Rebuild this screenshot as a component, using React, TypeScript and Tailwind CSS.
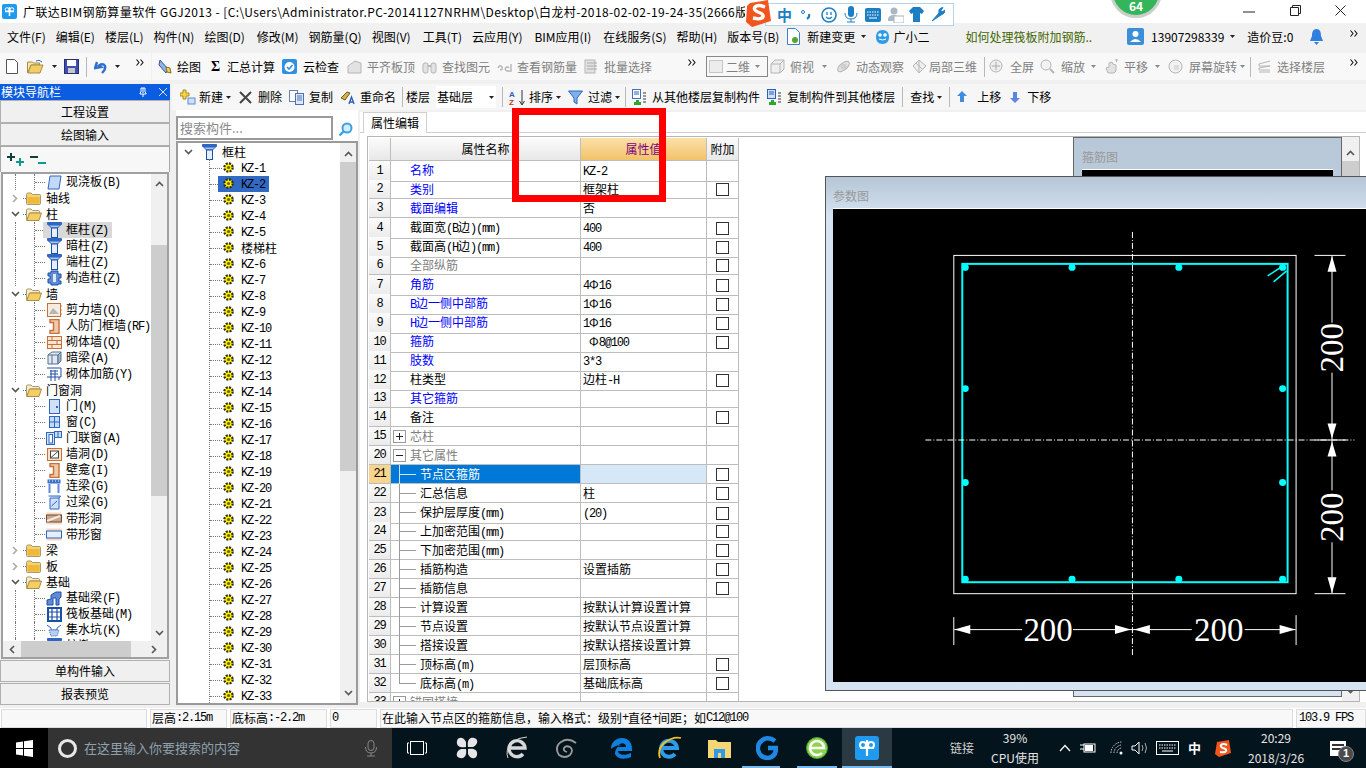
import React from "react";

const cjk = "[font-family:'Noto_Sans_CJK_SC','Liberation_Sans',sans-serif]";

function T({ s }: { s: string }) {
  const parts = s.split(/([\x00-\x7f]+)/).filter(Boolean);
  return (
    <>
      {parts.map((p, i) =>
        /^[\x00-\x7f]/.test(p) ? (
          <span key={i} className="[font-family:'Liberation_Mono',monospace] text-[12px] tracking-[-1.2px]">{p}</span>
        ) : (
          <span key={i}>{p}</span>
        )
      )}
    </>
  );
}

const Arrow = ({ cls = "", c = "#222" }: { cls?: string; c?: string }) => (
  <svg width="5" height="3" viewBox="0 0 5 3" className={cls}><path d="M0 0h5L2.5 3z" fill={c} /></svg>
);
const More = ({ cls = "" }: { cls?: string }) => (
  <svg width="8" height="7" viewBox="0 0 8 7" className={cls}><path d="M0.5 0.5 3 3.5 0.5 6.5M4.5 0.5 7 3.5 4.5 6.5" stroke="#111" fill="none" strokeWidth="1.1" /></svg>
);
const Sep = ({ cls = "" }: { cls?: string }) => <div className={`w-px h-[20px] bg-[#b8b8b8] ${cls}`} />;

/* ---------- tree icons ---------- */
const Col = () => (
  <svg width="15" height="16" viewBox="0 0 15 16"><path d="M0.5 0.5h14v2H0.5z" fill="#2f66c4" stroke="#2f66c4" /><path d="M1.5 3h12l-3 3h-6z" fill="#a9c4ee" stroke="#2f66c4" /><rect x="4.5" y="6" width="6" height="9.5" fill="#e4eefc" stroke="#1d4ea8" /></svg>
);
const Gear = () => (
  <svg width="11" height="11" viewBox="0 0 11 11"><circle cx="5.5" cy="5.5" r="4.2" fill="#ffef00" stroke="#2a2a10" strokeWidth="2.2" strokeDasharray="2 1.3" /><circle cx="5.5" cy="5.5" r="1.6" fill="#6c6410" /></svg>
);
const Folder = () => (
  <svg width="15" height="13" viewBox="0 0 15 13"><path d="M0.5 2.5Q0.5 1 2 1h3l1.5 1.5h7q1 0 1 1v8q0 1-1 1h-12q-1 0-1-1z" fill="#f5d26a" stroke="#a79a72" /><path d="M1.5 5h12v6.5h-12z" fill="#eeb93a" /></svg>
);
const FolderOpen = () => (
  <svg width="16" height="13" viewBox="0 0 16 13"><path d="M0.5 2Q0.5 1 2 1h3l1.5 1.5h6q1 0 1 1V5H4L1 12H0.5z" fill="#f8edc8" stroke="#a79a72" /><path d="M3.5 5h12L13 12.5H0.8z" fill="#f4cd63" stroke="#a88c4a" /></svg>
);
const Ic = ({ k }: { k: string }) => {
  const b = "#2f66c4";
  const o = "#c8703a";
  switch (k) {
    case "slab": return <svg width="15" height="15" viewBox="0 0 15 15"><path d="M3 1h11l-2 13H1z" fill="#c4d9f8" stroke={b} /></svg>;
    case "col": return <Col />;
    case "puzzle": return <svg width="15" height="16" viewBox="0 0 15 16"><path d="M4 1h7v3h3v4h-2v3h2v3h-3v1H4v-2H1V9h2V6H1V3h3z" fill="#5f8bd6" stroke="#1d4ea8" /><rect x="6" y="4" width="3" height="8" fill="#dce8fb" /></svg>;
    case "shear": return <svg width="15" height="14" viewBox="0 0 15 14"><rect x="0.5" y="0.5" width="13" height="13" fill="#f7ecdf" stroke={o} /><path d="M2 11 6 5l6 6z" fill="#b6b6b6" /><path d="M13 3h2M13 7h2M13 11h2" stroke={o} /></svg>;
    case "door": return <svg width="11" height="15" viewBox="0 0 11 15"><path d="M1 .5h9v14H1v-3h3.5v-8H1z" fill="#f1c9a6" stroke={o} strokeWidth="1.4" /></svg>;
    case "brick": return <svg width="15" height="13" viewBox="0 0 15 13"><rect x=".5" y=".5" width="14" height="12" fill="#fbe6d3" stroke={o} /><path d="M.5 4.5h14M.5 8.5h14M5 .5v4M10 4.5v4M5 8.5v4" stroke={o} /></svg>;
    case "beam": return <svg width="15" height="14" viewBox="0 0 15 14"><path d="M1 4 5 1h9l-3 3v9H1z" fill="#dfe8f3" stroke="#57708c" /><path d="M5 4v9M1 4h10M11 4l3-3v9l-3 3z" fill="#9fb6cf" stroke="#57708c" /></svg>;
    case "rebar": return <svg width="16" height="15" viewBox="0 0 16 15"><path d="M1 1h14v9H1M4 4h8M4 7h8M5 3v11M9 3v11M13 10v3" stroke="#1d4ea8" fill="none" /></svg>;
    case "dr": return <svg width="11" height="15" viewBox="0 0 11 15"><rect x=".5" y=".5" width="10" height="14" fill="#cfe0f8" stroke={b} /><rect x="7" y="7" width="2" height="2" fill={b} /></svg>;
    case "win": return <svg width="11" height="12" viewBox="0 0 11 12"><rect x=".5" y=".5" width="10" height="11" fill="#c4daf8" stroke={b} /><path d="M5.5 1v10M1 6h9" stroke={b} /></svg>;
    case "drwin": return <svg width="16" height="14" viewBox="0 0 16 14"><rect x=".5" y="1.5" width="8" height="12" fill="#d7e5fa" stroke={b} /><rect x="3" y="3.5" width="3.5" height="8.5" fill="#fff" stroke={b} /><rect x="8.5" y=".5" width="7" height="6" fill="#c4daf8" stroke={b} /><path d="M12 1v5" stroke={b} /></svg>;
    case "hole": return <svg width="15" height="13" viewBox="0 0 15 13"><rect x=".5" y=".5" width="14" height="12" fill="#fbe0c8" stroke={o} /><rect x="3.5" y="3" width="8" height="7" fill="#fff" stroke="#444" /><path d="M4 9.5 11 3.5" stroke="#444" /></svg>;
    case "lintel": return <svg width="14" height="14" viewBox="0 0 14 14"><rect x=".5" y=".5" width="13" height="4" fill="#3c70c9" /><path d="M2 2h1M5 2h1M8 2h1M11 2h1" stroke="#fff" /><path d="M2.5 5v9M11.5 5v9" stroke="#5f8bd6" strokeWidth="2" /></svg>;
    case "gl": return <svg width="13" height="15" viewBox="0 0 13 15"><path d="M.5 1h12l-1.5 2H2v11h9V3" fill="#cfe0f8" stroke={b} /><path d="M3.5 11 9 6" stroke={b} /></svg>;
    case "band": return <svg width="16" height="13" viewBox="0 0 16 13"><rect x=".5" y=".5" width="15" height="12" fill="#f8d8c0" /><rect x=".5" y="3" width="15" height="7" fill="#c9a88f" stroke="#6b4a33" /><path d="M1 9 14 4" stroke="#f5e9e0" strokeWidth="2" /></svg>;
    case "bandw": return <svg width="16" height="13" viewBox="0 0 16 13"><rect x=".5" y=".5" width="15" height="12" fill="#f8d8c0" /><rect x=".5" y="3" width="15" height="7" fill="#e4eefc" stroke={b} /></svg>;
    case "fbeam": return <svg width="16" height="15" viewBox="0 0 16 15"><path d="M1 14V9l4-1V4l5-3h5v5l-2 2v6h-3V7H7v7z" fill="#5f8bd6" stroke="#1d4ea8" /></svg>;
    case "raft": return <svg width="15" height="15" viewBox="0 0 15 15"><rect x="1" y="1" width="13" height="13" fill="#fff" stroke="#1d4ea8" strokeWidth="2" /><path d="M5 1v13M10 1v13M1 5h13M1 10h13" stroke="#1d4ea8" strokeWidth="1.2" /></svg>;
    case "pit": return <svg width="16" height="14" viewBox="0 0 16 14"><path d="M1 2l4 3v2h6V5l4-3" stroke={b} fill="none" /><path d="M3 7l2 6h6l2-6z" fill="#b9cef0" stroke={b} strokeDasharray="1 1" /></svg>;
    default: return null;
  }
};

/* ---------- left tree ---------- */
type L = { t: string; k?: string; f?: "o" | "c"; sel?: boolean };
const navRows: L[] = [
  { t: "现浇板(B)", k: "slab" }, { t: "轴线", f: "c" }, { t: "柱", f: "o" },
  { t: "框柱(Z)", k: "col", sel: true }, { t: "暗柱(Z)", k: "col" }, { t: "端柱(Z)", k: "col" }, { t: "构造柱(Z)", k: "puzzle" },
  { t: "墙", f: "o" }, { t: "剪力墙(Q)", k: "shear" }, { t: "人防门框墙(RF)", k: "door" }, { t: "砌体墙(Q)", k: "brick" }, { t: "暗梁(A)", k: "beam" }, { t: "砌体加筋(Y)", k: "rebar" },
  { t: "门窗洞", f: "o" }, { t: "门(M)", k: "dr" }, { t: "窗(C)", k: "win" }, { t: "门联窗(A)", k: "drwin" }, { t: "墙洞(D)", k: "hole" }, { t: "壁龛(I)", k: "door" }, { t: "连梁(G)", k: "lintel" }, { t: "过梁(G)", k: "gl" }, { t: "带形洞", k: "band" }, { t: "带形窗", k: "bandw" },
  { t: "梁", f: "c" }, { t: "板", f: "c" }, { t: "基础", f: "o" }, { t: "基础梁(F)", k: "fbeam" }, { t: "筏板基础(M)", k: "raft" }, { t: "集水坑(K)", k: "pit" }, { t: "柱墩(Y)", k: "col" },
];
const Chev = ({ open }: { open: boolean }) =>
  open ? (
    <svg width="9" height="6" viewBox="0 0 9 6"><path d="M1 1l3.5 3.5L8 1" stroke="#555" strokeWidth="1.6" fill="none" /></svg>
  ) : (
    <svg width="6" height="9" viewBox="0 0 6 9"><path d="M1 1l3.5 3.5L1 8" stroke="#aaa" strokeWidth="1.6" fill="none" /></svg>
  );

function NavRow({ r }: { r: L }) {
  return (
    <div className="relative h-[16px] flex items-center text-[12px] text-black whitespace-nowrap">
      <div className="absolute left-[12px] top-0 bottom-0 border-l border-dotted border-[#777]" />
      {r.f ? (
        <>
          <div className="absolute left-[7px] top-0 w-[10px] h-[16px] bg-white flex items-center justify-center"><Chev open={r.f === "o"} /></div>
          <div className="absolute left-[20px] top-[8px] w-[3px] border-t border-dotted border-[#777]" />
          <div className="absolute left-[23px] top-[2px]">{r.f === "o" ? <FolderOpen /> : <Folder />}</div>
          <span className="absolute left-[43px]"><T s={r.t} /></span>
        </>
      ) : (
        <>
          <div className="absolute left-[31px] top-0 bottom-0 border-l border-dotted border-[#777]" />
          <div className="absolute left-[32px] top-[8px] w-[10px] border-t border-dotted border-[#777]" />
          {r.sel && <div className="absolute left-[40px] top-0 w-[69px] h-[16px] bg-[#d9d9d9]" />}
          <div className="absolute left-[43px] top-0 w-[16px] h-[16px] flex items-center justify-center"><Ic k={r.k!} /></div>
          <span className="absolute left-[63px]"><T s={r.t} /></span>
        </>
      )}
    </div>
  );
}

const ScrollUp = () => <svg width="9" height="6" viewBox="0 0 9 6"><path d="M1 5l3.5-3.5L8 5" stroke="#555" strokeWidth="1.6" fill="none" /></svg>;
const ScrollDown = () => <svg width="9" height="6" viewBox="0 0 9 6"><path d="M1 1l3.5 3.5L8 1" stroke="#555" strokeWidth="1.6" fill="none" /></svg>;

function LeftPanel() {
  const btn = "h-[23px] flex items-center justify-center text-[12px] text-black bg-[#f0f0f0] border border-[#b0b0b0]";
  const btn2 = "h-[22px] flex items-center justify-center text-[12px] text-black bg-[#f0f0f0] border border-[#b0b0b0] mt-[1px]";
  return (
    <div className="w-[170px] shrink-0 flex flex-col">
      <div className="h-[16px] bg-[#0a5ce0] text-white text-[12px] leading-[16px] flex items-center pl-[1px]">
        <span className="flex-1">模块导航栏</span>
        <svg width="8" height="10" viewBox="0 0 8 10" className="mr-[12px]"><path d="M2 1h4v4l1 1v1H1V6l1-1zM4 7v3M4 1v5" stroke="#fff" fill="none" /></svg>
        <svg width="8" height="8" viewBox="0 0 8 8" className="mr-[3px]"><path d="M0 0l8 8M8 0L0 8" stroke="#cfe0ff" /></svg>
      </div>
      <div className={btn}>工程设置</div>
      <div className={btn}>绘图输入</div>
      <div className="h-[26px] bg-[#f7f7f7] border-x border-t border-[#a8a8a8] flex items-center pl-[6px] gap-[5px]">
        <svg width="18" height="13" viewBox="0 0 18 13"><path d="M0 4h8M4 0v8" stroke="#10403c" strokeWidth="2" /><path d="M9 9h8M13 5v8" stroke="#0c9b8f" strokeWidth="2" /></svg>
        <svg width="16" height="10" viewBox="0 0 16 10"><path d="M0 2h8" stroke="#10403c" strokeWidth="2" /><path d="M8 8h8" stroke="#0c9b8f" strokeWidth="2" /></svg>
      </div>
      <div className="h-[487px] border-2 border-[#a0a0a0] border-t-[#a0a0a0] bg-white flex flex-col ml-[1px] mr-[1px]">
        <div className="flex-1 flex overflow-hidden">
          <div className="w-[149px] overflow-hidden h-[467px]">{navRows.map((r, i) => <NavRow key={i} r={r} />)}</div>
          <div className="w-[16px] flex flex-col bg-[#f0f0f0]">
            <div className="h-[16px] flex items-center justify-center mt-[2px]"><ScrollUp /></div>
            <div className="h-[53px]" />
            <div className="h-[251px] bg-[#cdcdcd]" />
            <div className="flex-1" />
            <div className="h-[16px] flex items-center justify-center"><ScrollDown /></div>
          </div>
        </div>
        <div className="h-[16px] bg-[#f0f0f0] flex items-center">
          <div className="w-[18px] flex justify-center"><svg width="6" height="9" viewBox="0 0 6 9"><path d="M5 1 1.5 4.5 5 8" stroke="#555" strokeWidth="1.6" fill="none" /></svg></div>
          <div className="w-[110px] h-full bg-[#cdcdcd]" />
          <div className="w-[20px]" />
          <svg width="6" height="9" viewBox="0 0 6 9"><path d="M1 1l3.5 3.5L1 8" stroke="#555" strokeWidth="1.6" fill="none" /></svg>
        </div>
      </div>
      <div className={btn2}>单构件输入</div>
      <div className={btn2}>报表预览</div>
    </div>
  );
}

/* ---------- component list ---------- */
const kz: string[] = [];
for (let i = 1; i <= 33; i++) {
  kz.push(`KZ-${i}`);
  if (i === 5) kz.push("楼梯柱");
}

function CompList() {
  return (
    <div className="w-[188px] shrink-0 flex flex-col pl-[4px] pr-[2px] bg-[#f0f0f0]">
      <div className="h-[31px] bg-white flex items-end pb-[1px] pt-[6px]">
        <div className="w-[157px] h-[24px] border-2 border-[#9a9a9a] bg-white text-[13px] text-[#8a8a8a] flex items-center pl-[2px]">搜索构件...</div>
        <div className="flex-1 flex justify-center pb-[3px]">
          <svg width="15" height="15" viewBox="0 0 15 15"><circle cx="9" cy="6" r="4.5" fill="#d7ecfb" stroke="#3aa0e4" strokeWidth="2" /><path d="M5.5 9.5 1.5 13.5" stroke="#3aa0e4" strokeWidth="2.4" /></svg>
        </div>
      </div>
      <div className="h-[564px] border-2 border-[#9a9a9a] bg-white flex overflow-hidden">
        <div className="w-[163px] relative overflow-hidden text-[12px] text-black">
          <div className="h-[16px] relative flex items-center mt-[1px]">
            <div className="absolute left-[6px]"><ScrollDown /></div>
            <div className="absolute left-[24px] top-0"><Col /></div>
            <span className="absolute left-[44px]">框柱</span>
          </div>
          <div className="absolute left-[31px] top-[16px] bottom-0 border-l border-dotted border-[#777]" />
          {kz.map((k) => (
            <div key={k} className="relative h-[16px] flex items-center whitespace-nowrap">
              <div className="absolute left-[32px] top-[8px] w-[12px] border-t border-dotted border-[#777]" />
              {k === "KZ-2" && <div className="absolute left-[40px] top-0 w-[51px] h-[16px] bg-[#316ac5]" />}
              <div className="absolute left-[45px] top-[2px]"><Gear /></div>
              <span className="absolute left-[63px]"><T s={k} /></span>
            </div>
          ))}
        </div>
        <div className="w-[16px] flex flex-col bg-[#f0f0f0]">
          <div className="h-[16px] flex items-center justify-center mt-[3px]"><ScrollUp /></div>
          <div className="h-[309px] bg-[#cdcdcd]" />
          <div className="flex-1" />
          <div className="h-[16px] flex items-center justify-center mb-[2px]"><ScrollDown /></div>
        </div>
      </div>
    </div>
  );
}

/* ---------- property table ---------- */
type P = { n: string; name: string; c?: "b" | "g" | "k"; v?: string; ck?: boolean; child?: boolean; box?: "+" | "-"; last?: boolean; sel?: boolean };
const rows: P[] = [
  { n: "1", name: "名称", c: "b", v: "KZ-2" },
  { n: "2", name: "类别", c: "b", v: "框架柱", ck: true },
  { n: "3", name: "截面编辑", c: "b", v: "否" },
  { n: "4", name: "截面宽(B边)(mm)", v: "400", ck: true },
  { n: "5", name: "截面高(H边)(mm)", v: "400", ck: true },
  { n: "6", name: "全部纵筋", c: "g", ck: true },
  { n: "7", name: "角筋", c: "b", v: "4Φ16", ck: true },
  { n: "8", name: "B边一侧中部筋", c: "b", v: "1Φ16", ck: true },
  { n: "9", name: "H边一侧中部筋", c: "b", v: "1Φ16", ck: true },
  { n: "10", name: "箍筋", c: "b", v: " Φ8@100", ck: true },
  { n: "11", name: "肢数", c: "b", v: "3*3" },
  { n: "12", name: "柱类型", v: "边柱-H", ck: true },
  { n: "13", name: "其它箍筋", c: "b" },
  { n: "14", name: "备注", ck: true },
  { n: "15", name: "芯柱", c: "g", box: "+" },
  { n: "20", name: "其它属性", c: "g", box: "-" },
  { n: "21", name: "节点区箍筋", child: true, ck: true, sel: true },
  { n: "22", name: "汇总信息", child: true, v: "柱", ck: true },
  { n: "23", name: "保护层厚度(mm)", child: true, v: "(20)", ck: true },
  { n: "24", name: "上加密范围(mm)", child: true, ck: true },
  { n: "25", name: "下加密范围(mm)", child: true, ck: true },
  { n: "26", name: "插筋构造", child: true, v: "设置插筋", ck: true },
  { n: "27", name: "插筋信息", child: true, ck: true },
  { n: "28", name: "计算设置", child: true, v: "按默认计算设置计算" },
  { n: "29", name: "节点设置", child: true, v: "按默认节点设置计算" },
  { n: "30", name: "搭接设置", child: true, v: "按默认搭接设置计算" },
  { n: "31", name: "顶标高(m)", child: true, v: "层顶标高", ck: true },
  { n: "32", name: "底标高(m)", child: true, v: "基础底标高", ck: true, last: true },
  { n: "33", name: "锚固搭接", c: "g", box: "+" },
];

const Box = ({ s }: { s: "+" | "-" }) => (
  <svg width="13" height="13" viewBox="0 0 13 13"><rect x=".5" y=".5" width="12" height="12" fill="#fff" stroke="#9a9a9a" /><path d={s === "+" ? "M3 6.5h7M6.5 3v7" : "M3 6.5h7"} stroke="#222" /></svg>
);

function Row({ r }: { r: P }) {
  const color = r.sel ? "text-white" : r.c === "b" ? "text-[#0000ff]" : r.c === "g" ? "text-[#808080]" : "text-black";
  return (
    <div className="grid grid-cols-[22px_190px_126px_32px] h-[19px] text-[12px] leading-[18px]">
      <div className={`flex items-center justify-center border-r border-b border-[#bdbdbd] text-black ${r.sel ? "bg-[#f8d48c] text-[#800080]" : "bg-gradient-to-b from-[#fbfbfb] to-[#ebebeb]"}`}>
        <span className="[font-family:'Liberation_Mono',monospace] text-[12px] tracking-[-1.2px]">{r.n}</span>
      </div>
      <div className={`relative border-r border-b border-[#bdbdbd] whitespace-nowrap ${r.sel ? "bg-[#0078d7]" : ""} ${color}`}>
        {r.box && <div className="absolute left-[2px] top-[3px]"><Box s={r.box} /></div>}
        {r.child && (
          <>
            <div className={`absolute left-[8px] top-0 w-px ${r.last ? "h-[10px]" : "h-[19px]"} ${r.sel ? "bg-[#cfe3f7]" : "bg-[#9a9a9a]"}`} />
            <div className={`absolute left-[8px] top-[9px] w-[17px] h-px ${r.sel ? "bg-[#cfe3f7]" : "bg-[#9a9a9a]"}`} />
          </>
        )}
        <span className={`absolute top-0 ${r.child ? "left-[29px]" : "left-[19px]"}`}><T s={r.name} /></span>
      </div>
      <div className={`border-r border-b border-[#bdbdbd] pl-[2px] whitespace-pre text-black ${r.sel ? "bg-[#d6e8f7]" : ""}`}>{r.v && <T s={r.v} />}</div>
      <div className="border-r border-b border-[#bdbdbd] flex items-center justify-center">
        {r.ck && <div className="w-[13px] h-[13px] border border-[#333] bg-white" />}
      </div>
    </div>
  );
}

function PropTable() {
  return (
    <div className="w-[370px] shrink-0 h-[563px] overflow-hidden ml-[1px] mt-px">
      <div className="grid grid-cols-[22px_190px_126px_32px] h-[23px] text-[12px]">
        <div className="border-r border-b border-[#bdbdbd] bg-gradient-to-b from-[#fbfbfb] to-[#e8e8e8]" />
        <div className="border-r border-b border-[#bdbdbd] bg-gradient-to-b from-[#fbfbfb] to-[#e8e8e8] flex items-center justify-center text-black">属性名称</div>
        <div className="border-r border-b border-[#bdbdbd] bg-gradient-to-b from-[#fbe0a8] to-[#f2c268] flex items-center justify-center text-[#800080]">属性值</div>
        <div className="border-r border-b border-[#bdbdbd] bg-gradient-to-b from-[#fbfbfb] to-[#e8e8e8] flex items-center justify-center text-black">附加</div>
      </div>
      {rows.map((r) => <Row key={r.n} r={r} />)}
    </div>
  );
}

/* ---------- toolbars ---------- */
function TB({ icon, label, cls = "", gray, gap = "gap-[5px]" }: { icon: React.ReactNode; label: string; cls?: string; gray?: boolean; gap?: string }) {
  return (
    <div className={`flex items-center shrink-0 ${gap} ${cls}`}>
      {icon}
      <span className={`text-[12px] whitespace-nowrap ${gray ? "text-[#808080]" : "text-black"}`}>{label}</span>
    </div>
  );
}
const G = ({ d }: { d: React.ReactNode }) => <svg width="15" height="15" viewBox="0 0 15 15" className="shrink-0">{d}</svg>;
const gs = { stroke: "#b5b5b5", fill: "#e2e2e2" };

function Toolbar1() {
  return (
    <div className="h-[27px] flex items-center mt-[3px] bg-[#f0f0f0] shrink-0">
      <div className="w-[151px] h-full bg-[#f8f8f8] flex items-center pl-[6px]">
        <svg width="12" height="15" viewBox="0 0 12 15"><path d="M.5.5h8l3 3v11H.5z" fill="#fff" stroke="#555" /></svg>
        <svg width="17" height="15" viewBox="0 0 17 15" className="ml-[9px]"><path d="M.5 3h5l1 1h6v2H4L1 13.5H.5z" fill="#f8e3a8" stroke="#a88c4a" /><path d="M4 6h12l-3 8H1z" fill="#f4cd63" stroke="#a88c4a" /><path d="M9 2q3-2 6 1" stroke="#3a6fc8" fill="none" /></svg>
        <Arrow cls="ml-[8px]" />
        <svg width="15" height="15" viewBox="0 0 15 15" className="ml-[7px]"><rect x=".5" y=".5" width="14" height="14" fill="#3d4fb0" stroke="#27306e" /><rect x="3" y="1" width="9" height="6" fill="#fff" /><rect x="4" y="9" width="7" height="5" fill="#c8c8c8" /></svg>
        <Sep cls="ml-[7px]" />
        <svg width="13" height="14" viewBox="0 0 13 14" className="ml-[7px]"><path d="M3 2 1 8l6-1-2-1.5Q9 3 11 6q1 3-3 7" stroke="#2f6fd0" strokeWidth="2.4" fill="none" /></svg>
        <Arrow cls="ml-[8px]" />
        <More cls="ml-[16px] mb-[8px]" />
      </div>
      <div className="w-[549px] h-full bg-[#f8f8f8] ml-px flex items-center pl-[5px] relative">
        <TB label="绘图" icon={<svg width="15" height="16" viewBox="0 0 15 16"><path d="M3 1l8 9-2 4-7-8z" fill="#8fb3e6" stroke="#33558f" /><path d="M9 8l4 1 1 5-4-1z" fill="#f4cd63" stroke="#8c6d20" /></svg>} />
        <TB cls="ml-[10px]" label="汇总计算" icon={<span className="w-[11px] font-bold text-[14px] leading-none text-black [font-family:'Liberation_Serif',serif]">Σ</span>} />
        <TB cls="ml-[7px]" gap="gap-[6px]" label="云检查" icon={<svg width="15" height="15" viewBox="0 0 15 15"><rect width="15" height="15" rx="2" fill="#2f8fe0" /><circle cx="7.5" cy="8" r="5" fill="#fff" /><path d="M5 8l2 2 3.5-4" stroke="#2f8fe0" strokeWidth="1.6" fill="none" /></svg>} />
        <TB cls="ml-[8px]" gray label="平齐板顶" icon={<G d={<path d="M1 14V7l7-5 6 2v10z" {...gs} />} />} />
        <TB cls="ml-[7px]" gray label="查找图元" icon={<G d={<><rect x="1" y="4" width="5" height="10" rx="2" {...gs} /><rect x="9" y="4" width="5" height="10" rx="2" {...gs} /><path d="M6 7h3" stroke="#b5b5b5" strokeWidth="2" /></>} />} />
        <TB cls="ml-[7px]" gray label="查看钢筋量" icon={<G d={<path d="M1 9q2-4 4-1 1 3-2 3M14 5v7h-4a2 2 0 1 1 2-3" fill="none" stroke="#b5b5b5" strokeWidth="1.4" />} />} />
        <TB cls="ml-[7px]" gray label="批量选择" icon={<G d={<><rect x="1" y="1" width="10" height="13" {...gs} /><path d="M3 4h10M3 7h10M3 10h10" stroke="#aaa" /></>} />} />
        <More cls="absolute right-[5px] top-[6px]" />
      </div>
      <div className="flex-1 h-full bg-[#f8f8f8] flex items-center relative">
        <div className="ml-[5px] w-[62px] h-[21px] border border-[#888] flex items-center pl-[2px] shrink-0">
          <div className="w-[14px] h-[13px] bg-[#ececec] border border-[#c6c6c6]" />
          <span className="ml-[3px] text-[12px] text-[#808080]">二维</span>
          <Arrow cls="ml-[5px]" c="#888" />
        </div>
        <TB cls="ml-[2px]" gray label="俯视" icon={<G d={<path d="M1 5l4-4h9v9l-4 4H1zM1 5h9v9M10 5l4-4" {...gs} fill="#efefef" />} />} />
        <Arrow cls="ml-[8px]" c="#888" />
        <TB cls="ml-[9px]" gray label="动态观察" icon={<G d={<><ellipse cx="7.5" cy="7.5" rx="7" ry="3.5" transform="rotate(-40 7.5 7.5)" {...gs} /><circle cx="7.5" cy="7.5" r="3" fill="#cfcfcf" /></>} />} />
        <TB cls="ml-[8px]" gap="gap-[2px]" gray label="局部三维" icon={<G d={<path d="M7 1l7 6-7 7-6-7zM4 4l7 7M7 1v13" {...gs} fill="#eee" />} />} />
        <Sep cls="ml-[7px]" />
        <TB cls="ml-[4px]" gap="gap-[6px]" gray label="全屏" icon={<G d={<><circle cx="7" cy="7" r="6" fill="#eee" stroke="#b5b5b5" /><path d="M3 7h8M7 3v8" stroke="#aaa" /></>} />} />
        <TB cls="ml-[6px]" gap="gap-[6px]" gray label="缩放" icon={<G d={<><circle cx="6" cy="6" r="5" fill="#f3f3f3" stroke="#b5b5b5" /><path d="M10 10l4 4" stroke="#b5b5b5" strokeWidth="2" /></>} />} />
        <Arrow cls="ml-[6px]" c="#888" />
        <TB cls="ml-[8px]" gray label="平移" icon={<G d={<path d="M4 14l-2-5 3-1V4l3-1 1 2 3 1v6l-2 2zM11 1h3M12.5 0v3" {...gs} />} />} />
        <Arrow cls="ml-[7px]" c="#888" />
        <TB cls="ml-[8px]" gap="gap-[6px]" gray label="屏幕旋转" icon={<G d={<><circle cx="7.5" cy="7.5" r="6.5" fill="#f2f2f2" stroke="#b5b5b5" /><rect x="6" y="6" width="5" height="5" fill="#ddd" /></>} />} />
        <Arrow cls="ml-[3px]" c="#888" />
        <Sep cls="ml-[5px]" />
        <TB cls="ml-[6px]" gray label="选择楼层" icon={<G d={<path d="M13 2 2 5v2h11M13 7 2 9v2h11M2 13h11" fill="none" stroke="#b5b5b5" />} />} />
        <More cls="absolute right-[8px] top-[6px]" />
      </div>
    </div>
  );
}

function Toolbar2() {
  return (
    <div className="h-[26px] bg-[#f6f6f6] flex items-center pl-[8px] shrink-0">
      <TB gap="gap-[3px]" label="新建" icon={<svg width="16" height="16" viewBox="0 0 16 16"><path d="M3 1h3v3h3v3H6v3H3V7H0V4h3z" fill="#f6d24a" stroke="#a88c20" /><rect x="8" y="9" width="7" height="6" fill="#cfe0f8" stroke="#5f8bd6" /></svg>} />
      <Arrow cls="ml-[3px]" />
      <TB cls="ml-[8px]" gap="gap-[6px]" label="删除" icon={<svg width="13" height="13" viewBox="0 0 13 13"><path d="M1 1l11 11M12 1 1 12" stroke="#444" strokeWidth="2" /></svg>} />
      <TB cls="ml-[7px]" label="复制" icon={<svg width="15" height="15" viewBox="0 0 15 15"><rect x=".5" y=".5" width="8" height="11" fill="#fff" stroke="#6a7fa8" /><rect x="6.5" y="3.5" width="8" height="11" fill="#dfe8f8" stroke="#4a6fb8" /><path d="M8 6h5M8 8h5M8 10h5" stroke="#4a6fb8" /></svg>} />
      <TB cls="ml-[7px]" label="重命名" icon={<svg width="15" height="15" viewBox="0 0 15 15"><path d="M1 8l6-6 3 1-5 7z" fill="#d6b24a" stroke="#6d5a20" /><path d="M9 14l2.5-7L14 14M10 12h3" stroke="#2f5fb8" strokeWidth="1.4" fill="none" /></svg>} />
      <Sep cls="ml-[6px]" />
      <span className="ml-[3px] text-[12px]">楼层</span>
      <div className="ml-[6px] w-[60px] h-[22px] bg-white flex items-center text-[12px] pl-[1px] shrink-0">基础层<Arrow cls="ml-auto mr-[2px]" /></div>
      <Sep cls="ml-[6px]" />
      <TB cls="ml-[5px]" gap="gap-[3px]" label="排序" icon={<svg width="18" height="17" viewBox="0 0 18 17"><path d="M14 1v14M11.5 12l2.5 4 2.5-4" stroke="#333" fill="none" /><text x="1" y="8" fontSize="8" fill="#2f5fb8" fontFamily="Liberation Sans" fontWeight="700">A</text><text x="1" y="16" fontSize="8" fill="#c0392b" fontFamily="Liberation Sans" fontWeight="700">Z</text></svg>} />
      <Arrow cls="ml-[3px]" />
      <TB cls="ml-[7px]" label="过滤" icon={<svg width="15" height="15" viewBox="0 0 15 15"><path d="M.5 1h14L9 8v6l-3-2V8z" fill="#7fb0e8" stroke="#2f66c4" /></svg>} />
      <Arrow cls="ml-[3px]" />
      <Sep cls="ml-[5px]" />
      <TB cls="ml-[6px]" label="从其他楼层复制构件" icon={<svg width="15" height="17" viewBox="0 0 15 17"><rect x=".5" y=".5" width="8" height="9" fill="#fff" stroke="#4a6fb8" /><path d="M2 3h5M2 5h5" stroke="#2f5fb8" /><path d="M4 11h3v2h2v3H2v-3h2z" fill="#2fa52f" /><path d="M11 4h3M11 7h3M11 10h3M11 13h3" stroke="#777" strokeWidth="1.6" /></svg>} />
      <TB cls="ml-[7px]" label="复制构件到其他楼层" icon={<svg width="15" height="17" viewBox="0 0 15 17"><rect x=".5" y=".5" width="8" height="9" fill="#cfe0f8" stroke="#2f5fb8" /><path d="M2 3h5M2 5h5" stroke="#2f5fb8" /><path d="M4 11h3v2h2v3H2v-3h2z" fill="#2fa52f" /><path d="M11 4h3M11 7h3M11 10h3M11 13h3" stroke="#777" strokeWidth="1.6" /></svg>} />
      <Sep cls="ml-[7px]" />
      <span className="ml-[7px] text-[12px] shrink-0">查找</span>
      <Arrow cls="ml-[3px]" />
      <Sep cls="ml-[7px]" />
      <TB cls="ml-[7px]" gap="gap-[10px]" label="上移" icon={<svg width="10" height="12" viewBox="0 0 10 12"><path d="M5 0l5 5H7v6H3V5H0z" fill="#3f8ce0" /></svg>} />
      <TB cls="ml-[9px]" gap="gap-[7px]" label="下移" icon={<svg width="10" height="12" viewBox="0 0 10 12"><path d="M5 12 0 7h3V1h4v6h3z" fill="#5d86e0" /></svg>} />
    </div>
  );
}

function MenuBar() {
  const items = [
    { t: "文件(F)", c: "" }, { t: "编辑(E)", c: "" }, { t: "楼层(L)", c: "" }, { t: "构件(N)", c: "" }, { t: "绘图(D)", c: "mr-[2px]" }, { t: "修改(M)", c: "" }, { t: "钢筋量(Q)", c: "" },
    { t: "视图(V)", c: "mr-[2px]" }, { t: "工具(T)", c: "" }, { t: "云应用(Y)", c: "mr-[2px]" }, { t: "BIM应用(I)", c: "mr-[2px]" }, { t: "在线服务(S)", c: "" }, { t: "帮助(H)", c: "" }, { t: "版本号(B)", c: "" },
  ];
  return (
    <div className="h-[27px] bg-[#f1f1f1] flex items-center pl-[7px] text-[12px] text-black shrink-0 relative">
      <div className="flex gap-[10px] whitespace-nowrap">{items.map((m) => <span key={m.t} className={m.c}>{m.t}</span>)}</div>
      <svg width="13" height="17" viewBox="0 0 13 17" className="ml-[8px]"><path d="M.5.5h8l4 4v12H.5z" fill="#fff" stroke="#3a7fd0" /><circle cx="8" cy="12" r="3" fill="#57a52f" /></svg>
      <span className="ml-[7px]">新建变更</span>
      <Arrow cls="ml-[6px]" />
      <svg width="15" height="16" viewBox="0 0 15 16" className="ml-[9px]"><path d="M7.5 1C12 1 14 4 14 8s-2 7-6.500 7S1 12 1 8s2-7 6.500-7z" fill="#2f9be8" /><circle cx="5" cy="6" r="1.800" fill="#fff" /><circle cx="10" cy="6" r="1.800" fill="#fff" /><path d="M4 10q3.500 2 7 0" stroke="#fff" fill="none" /></svg>
      <span className="ml-[3px]">广小二</span>
      <span className="ml-[36px] text-[#3f6600]">如何处理筏板附加钢筋..</span>
      <svg width="17" height="17" viewBox="0 0 17 17" className="ml-[35px]"><rect width="17" height="17" rx="2" fill="#3a8fd8" /><circle cx="8.500" cy="6" r="3" fill="#fff" /><path d="M3 14q5.500-6 11 0z" fill="#fff" /></svg>
      <span className="ml-[7px]">13907298339</span>
      <Arrow cls="ml-[6px]" />
      <span className="ml-[12px]">造价豆:0</span>
      <svg width="13" height="17" viewBox="0 0 13 17" className="ml-[17px]"><path d="M6.500 1C10 1 11 4 11 8l2 5H0l2-5c0-4 1-7 4.500-7z" fill="#2f7fe0" /><path d="M4 14h5l-2.500 3z" fill="#2f7fe0" /></svg>
      <More cls="absolute right-[8px] top-[7px]" />
    </div>
  );
}

/* ---------- overlays ---------- */
function Ime() {
  const c = "#1c7fc4";
  return (
    <div className="absolute left-[745px] top-0 flex items-start z-30">
      <svg width="26" height="28" viewBox="0 0 26 28" className="z-10">
        <path d="M5 3 23 0l3 21-19 6L1 22 2 6z" fill="#f0561d" />
        <path d="M20 7q-7-3-10 0-2 3 3 5 6 2 5 5-2 3-10 1" stroke="#fff" strokeWidth="3.4" fill="none" />
      </svg>
      <div className="-ml-[6px] mt-[3px] w-[189px] h-[23px] bg-white border border-[#b8d2e8] flex items-center pl-[11px] gap-[6px]">
        <span className="text-[15px] font-bold leading-none" style={{ color: c }}>中</span>
        <svg width="12" height="12" viewBox="0 0 12 12" className="ml-[2px]"><circle cx="3" cy="3" r="1.500" fill="none" stroke={c} /><path d="M9 5q1 3-2 5" stroke={c} strokeWidth="2" fill="none" /></svg>
        <svg width="16" height="16" viewBox="0 0 16 16" className="ml-[3px]"><circle cx="8" cy="8" r="7" fill="none" stroke={c} strokeWidth="1.600" /><path d="M6 5v3M10 5v3M5 10q3 3 6 0" stroke={c} fill="none" strokeWidth="1.300" /></svg>
        <svg width="14" height="17" viewBox="0 0 14 17" className="ml-[1px]"><rect x="4" y="0" width="6" height="11" rx="3" fill={c} /><path d="M1 7q0 6 6 6t6-6M7 13v3M3 16h8" stroke={c} fill="none" /></svg>
        <svg width="16" height="14" viewBox="0 0 16 14" className="ml-[1px]"><rect width="16" height="14" rx="2" fill={c} /><path d="M2 4h12M2 7h12" stroke="#fff" strokeDasharray="1.500 1" /><path d="M4 10h8" stroke="#fff" /></svg>
        <svg width="16" height="17" viewBox="0 0 16 17" className="ml-[1px]"><circle cx="6" cy="5" r="3.500" fill="#a8b8c4" /><path d="M0 14q0-5 6-5 4 0 5 3v3H0z" fill="#a8b8c4" /><rect x="6" y="10" width="10" height="7" fill="#fff" stroke="#a8b8c4" /></svg>
        <svg width="15" height="15" viewBox="0 0 15 15" className="-ml-[1px]"><path d="M4 0h7l4 4-2 3-2-1v9H4V6L2 7 0 4z" fill={c} /></svg>
        <svg width="14" height="15" viewBox="0 0 14 15" className="ml-[1px]"><path d="M1 14l7-8q-1-4 2-5l2-.5-2 3 1 1.500 3-2q0 4-4 5z" fill={c} stroke={c} /></svg>
      </div>
    </div>
  );
}

function Dim() {
  const vDash = "6 2 1 2";
  return (
    <svg className="w-full h-full block" viewBox="833 208 533 474" fontFamily="Liberation Serif, serif">
      <rect x="953.5" y="254.5" width="343" height="339" fill="none" stroke="#fff" />
      <rect x="962" y="263" width="326" height="319" fill="none" stroke="#00ffff" strokeWidth="2" />
      {[965, 1072, 1179, 1283].map((x) => <circle key={x} cx={x} cy={266.5} r="3.500" fill="#00ffff" />)}
      {[965, 1072, 1179, 1283].map((x) => <circle key={x} cx={x} cy={579} r="3.500" fill="#00ffff" />)}
      {[388, 482].map((y) => [965, 1283].map((x) => <circle key={x + "-" + y} cx={x} cy={y} r="3.500" fill="#00ffff" />))}
      <path d="M1268 275 1285 264M1274 281 1287 270" stroke="#00ffff" strokeWidth="1.500" />
      <path d="M1132.500 231V657" stroke="#fff" strokeDasharray={vDash} />
      <path d="M925 439.500H1355" stroke="#fff" strokeDasharray={vDash} />
      <path d="M1315 254.500H1346M1315 593.500H1346M1315 439.500H1346" stroke="#fff" />
      <path d="M1332.500 255V322M1332.500 372V490M1332.500 542V593" stroke="#fff" />
      <path d="M1332.500 255 1337 271H1328zM1332.500 438 1328 423H1337zM1332.500 441 1337 456H1328zM1332.500 593 1328 577H1337z" fill="#fff" />
      <text transform="translate(1344 347) rotate(-90)" textAnchor="middle" fontSize="33" fill="#fff">200</text>
      <text transform="translate(1344 517) rotate(-90)" textAnchor="middle" fontSize="33" fill="#fff">200</text>
      <path d="M953.500 617V645M1296.500 615V645" stroke="#fff" />
      <path d="M954 629.500H1022M1073 629.500H1192M1245 629.500H1296" stroke="#fff" />
      <path d="M954 629.500 970 625V634zM1131 629.500 1115 625V634zM1134 629.500 1150 625V634zM1296 629.500 1280 625V634z" fill="#fff" />
      <text x="1048" y="641" textAnchor="middle" fontSize="33" fill="#fff">200</text>
      <text x="1219" y="641" textAnchor="middle" fontSize="33" fill="#fff">200</text>
    </svg>
  );
}

/* ---------- taskbar ---------- */
const TaskIcon = ({ children, cls = "" }: { children: React.ReactNode; cls?: string }) => (
  <div className={`w-[50px] h-full flex items-center justify-center relative shrink-0 ${cls}`}>{children}</div>
);
const EGlyph = ({ c, w = 3.4 }: { c: string; w?: number }) => <path d="M5 12h15a8 8 0 1 0-2 6" stroke={c} strokeWidth={w} fill="none" />;

function Taskbar() {
  return (
    <div className="h-[40px] bg-[#04141c] flex items-center shrink-0 text-white relative">
      <div className="w-[48px] h-full bg-black flex items-center justify-center shrink-0">
        <svg width="17" height="17" viewBox="0 0 17 17"><path d="M0 2.500 7 1.500V8H0zM8 1.300 17 0V8H8zM0 9h7v6.500L0 14.500zM8 9h9v8l-9-1.300z" fill="#fff" /></svg>
      </div>
      <div className="w-[344px] h-full bg-[#333333] flex items-center shrink-0 relative">
        <div className="ml-[10px] w-[19px] h-[19px] rounded-full border-[3px] border-[#e8e8e8]" />
        <span className="ml-[7px] text-[13px] text-[#8fa0ae]">在这里输入你要搜索的内容</span>
        <svg width="12" height="17" viewBox="0 0 12 17" className="absolute left-[317px] top-[12px]"><rect x="3" y=".5" width="6" height="10" rx="3" fill="none" stroke="#888" /><path d="M.5 7q0 6 5.500 6t5.500-6M6 13v3M2 16h8" stroke="#888" fill="none" /></svg>
      </div>
      <TaskIcon><svg width="20" height="14" viewBox="0 0 20 14"><rect x="3.500" y=".5" width="13" height="13" fill="none" stroke="#fff" /><path d="M2 2H.5v10H2M18 2h1.500v10H18" stroke="#fff" fill="none" /></svg></TaskIcon>
      <TaskIcon><svg width="22" height="22" viewBox="0 0 22 22"><g fill="#e6e6e6"><path d="M10 10C4 11 0 9 1 4s7-4 9 1zM12 10C11 4 13 0 18 1s4 7-1 9zM12 12c6-1 10 1 9 6s-7 4-9-1zM10 12c1 6-1 10-6 9s-4-7 1-9z" /></g></svg></TaskIcon>
      <TaskIcon><svg width="24" height="24" viewBox="0 0 24 24"><EGlyph c="#d8d8d8" /><path d="M3 22Q0 15 6 7 14 1 22 1" stroke="#d8d8d8" fill="none" /></svg></TaskIcon>
      <TaskIcon><svg width="22" height="22" viewBox="0 0 22 22"><path d="M20 6Q12 0 5 5t-2 13q6 4 11 0 4-5 0-8-4-2-6 1-1 3 3 4" stroke="#9a9a9a" strokeWidth="1.800" fill="none" /></svg></TaskIcon>
      <TaskIcon cls="pl-[8px]"><svg width="24" height="24" viewBox="0 0 24 24"><path d="M2 13C2 6 7 2 13 2c6 0 10 4 10 11v2H9c0 4 7 5 13 2v4c-7 3-14 2-16-3 0-5 3-8 6-9-4 0-8 2-10 4zm7-2h8c0-5-7-5-8 0z" fill="#0f7fe0" /></svg></TaskIcon>
      <TaskIcon cls="pl-[6px]"><svg width="26" height="24" viewBox="0 0 26 24"><EGlyph c="#2f9be8" w={4} /><path d="M3 22Q0 14 7 7 16 0 24 2" stroke="#f4c020" strokeWidth="1.800" fill="none" /></svg></TaskIcon>
      <TaskIcon cls="pl-[4px]"><svg width="23" height="20" viewBox="0 0 23 20"><path d="M0 2h8l2 2h13v16H0z" fill="#f4d675" /><path d="M6 11h11v9H6z" fill="#2f9be8" /><path d="M10 15h3v5h-3z" fill="#f4d675" /></svg></TaskIcon>
      <TaskIcon><svg width="22" height="24" viewBox="0 0 22 24"><path d="M19 5Q14 1 8 3 1 7 2 14q2 8 10 8 8-1 8-10h-8" stroke="#1e88e5" strokeWidth="4.500" fill="none" /></svg><div className="absolute left-[0px] right-[12px] bottom-0 h-[2px] bg-[#76b9ed]" /></TaskIcon>
      <TaskIcon><svg width="24" height="24" viewBox="0 0 24 24"><circle cx="12" cy="12" r="10.500" fill="#8fd14f" stroke="#3aa52f" /><path d="M5 12h14a7 7 0 1 0-2 5" stroke="#fff" strokeWidth="2.500" fill="none" /></svg><div className="absolute left-[5px] right-[5px] bottom-0 h-[2px] bg-[#76b9ed]" /></TaskIcon>
      <TaskIcon cls="bg-[#2b3a42]"><svg width="24" height="24" viewBox="0 0 24 24"><rect width="24" height="24" rx="3" fill="#1e9bf0" /><path d="M12 4v16M5 12h14" stroke="#fff" strokeWidth="2.200" /><circle cx="8" cy="9" r="3" stroke="#fff" strokeWidth="2" fill="none" /><circle cx="16" cy="9" r="3" stroke="#fff" strokeWidth="2" fill="none" /></svg><div className="absolute inset-x-0 bottom-0 h-[2px] bg-[#76b9ed]" /></TaskIcon>
      <span className="ml-[58px] text-[12px] text-[#d0d0d0] shrink-0">链接</span>
      <div className="ml-[17px] w-[48px] flex flex-col items-center leading-[20px] text-[12px] text-[#e6e6e6] shrink-0"><span>39%</span><span>CPU使用</span></div>
      <svg width="12" height="8" viewBox="0 0 12 8" className="ml-[20px]"><path d="M1 7l5-5.500L11 7" stroke="#fff" fill="none" strokeWidth="1.200" /></svg>
      <svg width="16" height="12" viewBox="0 0 16 12" className="ml-[9px]"><rect x="4" y="2" width="11" height="8" fill="none" stroke="#fff" /><rect x="5" y="3" width="8" height="6" fill="#fff" /><path d="M0 3h4M0 7h4" stroke="#fff" /></svg>
      <svg width="14" height="14" viewBox="0 0 14 14" className="ml-[14px]"><path d="M1 12a11 11 0 0 1 11-11M4 12a8 8 0 0 1 8-8M7 12a5 5 0 0 1 5-5" stroke="#cfcfcf" fill="none" strokeDasharray="1.500 1" /><circle cx="11" cy="12" r="1.500" fill="#fff" /></svg>
      <svg width="16" height="14" viewBox="0 0 16 14" className="ml-[7px]"><path d="M1 5h3l4-4v12L4 9H1z" fill="none" stroke="#fff" /><path d="M11 4q2 3 0 6M14 2q3 5 0 10" stroke="#aaa" fill="none" /></svg>
      <svg width="23" height="14" viewBox="0 0 23 14" className="ml-[9px]"><rect x=".5" y=".5" width="22" height="13" fill="none" stroke="#fff" /><path d="M3 4h17M3 7h17" stroke="#fff" strokeDasharray="1.500 1" /><path d="M6 10h11" stroke="#fff" /></svg>
      <span className="ml-[9px] text-[13px] font-bold text-white shrink-0">中</span>
      <svg width="16" height="17" viewBox="0 0 16 17" className="ml-[14px]"><path d="M2 2 14 0l2 13-12 4-4-3z" fill="#f0561d" /><path d="M12 5q-4-2-6 0-1 2 2 3 4 1 3 3-1 2-6 1" stroke="#fff" strokeWidth="2" fill="none" /></svg>
      <div className="ml-[12px] w-[66px] flex flex-col items-center leading-[20px] text-[12px] text-[#e6e6e6] shrink-0"><span>20:29</span><span>2018/3/26</span></div>
      <div className="relative ml-[21px] w-[16px] h-[15px] bg-white shrink-0">
        <div className="absolute left-[2px] top-[3px] w-[12px] h-[2px] bg-[#333]" />
        <div className="absolute left-[2px] top-[7px] w-[12px] h-[2px] bg-[#333]" />
        <div className="absolute left-[8px] top-[5px] w-[16px] h-[16px] rounded-full bg-[#4a4a4a] border border-[#888] text-white text-[11px] font-bold flex items-center justify-center leading-none [font-family:'Liberation_Sans',sans-serif]">1</div>
      </div>
    </div>
  );
}

export default function App() {
  return (
    <div className={`w-[1366px] h-[768px] relative overflow-hidden bg-[#f0f0f0] flex flex-col ${cjk}`}>
      <div className="h-[23px] bg-white flex items-center shrink-0 relative overflow-hidden">
        <svg width="15" height="15" viewBox="0 0 15 15" className="ml-[2px]"><rect width="15" height="15" rx="2" fill="#1e9bf0" /><path d="M7.500 3v9M3 7.500h9" stroke="#fff" strokeWidth="1.500" /><circle cx="5" cy="5.500" r="1.800" fill="none" stroke="#fff" /><circle cx="10" cy="5.500" r="1.800" fill="none" stroke="#fff" /></svg>
        <span className="ml-[6px] w-[722px] overflow-hidden whitespace-nowrap text-[12px] tracking-[0.4px] text-black">广联达BIM钢筋算量软件 GGJ2013 - [C:\Users\Administrator.PC-20141127NRHM\Desktop\白龙村-2018-02-02-19-24-35(2666版</span>
        <svg width="12" height="2" viewBox="0 0 12 2" className="absolute left-[1243px] top-[11px]"><path d="M0 1h12" stroke="#222" /></svg>
        <svg width="11" height="11" viewBox="0 0 11 11" className="absolute left-[1290px] top-[5px]"><path d="M2.500 2.500V.5h8v8h-2M.5 2.500h8v8h-8z" stroke="#222" fill="#fff" /></svg>
        <svg width="11" height="11" viewBox="0 0 11 11" className="absolute left-[1335px] top-[5px]"><path d="M.5.5l10 10M10.500.5l-10 10" stroke="#222" /></svg>
      </div>
      <MenuBar />
      <Toolbar1 />
      <div className="h-[4px] shrink-0" />
      <div className="flex-1 flex min-h-0">
        <LeftPanel />
        <div className="flex-1 flex flex-col ml-[2px] min-w-0">
          <Toolbar2 />
          <div className="flex-1 flex min-h-0">
            <CompList />
            <div className="flex-1 flex flex-col bg-white min-w-0">
              <div className="h-[2px] bg-[#f0f0f0]" />
              <div className="h-[21px] border-b border-[#cfcfcf] flex items-end pl-[3px]">
                <div className="w-[64px] h-[21px] border border-b-0 border-[#cfcfcf] bg-white -mb-px flex items-center justify-center text-[12px] text-black">属性编辑</div>
              </div>
              <div className="h-[3px]" />
              <div className="ml-[7px] mr-[6px] h-[566px] border border-[#b5b5b5] flex overflow-hidden">
                <PropTable />
                <div className="flex-1" />
                <div className="w-[269px] shrink-0 border border-[#666] bg-gradient-to-b from-[#b8c8d8] to-[#d6e4f2] pl-[8px] pr-[8px] text-[12px] text-[#999] h-[560px]">
                  <div className="h-[31px] flex items-center pt-[6px]">箍筋图</div>
                  <div className="h-[20px] bg-black border-t border-white" />
                </div>
                <div className="w-[17px] shrink-0 bg-[#f0f0f0] flex flex-col">
                  <div className="h-[16px] mt-[8px] flex items-center justify-center"><ScrollUp /></div>
                  <div className="h-[200px] bg-[#cdcdcd]" />
                  <div className="h-[16px] mt-auto mb-[2px] flex items-center justify-center"><ScrollDown /></div>
                </div>
              </div>
              <div className="flex-1 bg-[#f0f0f0]" />
            </div>
          </div>
        </div>
      </div>
      <div className="h-[20px] bg-white flex items-center gap-[3px] text-[12px] text-black shrink-0 pl-px">
        <div className="w-[146px] h-[19px] border border-[#dcdcdc] bg-[#f8f8f8]" />
        <div className="w-[77px] h-[19px] border border-[#dcdcdc] bg-[#f8f8f8] flex items-center pl-[1px]"><T s="层高:2.15m" /></div>
        <div className="w-[97px] h-[19px] border border-[#dcdcdc] bg-[#f8f8f8] flex items-center pl-[1px]"><T s="底标高:-2.2m" /></div>
        <div className="w-[47px] h-[19px] border border-[#dcdcdc] bg-[#f8f8f8] flex items-center pl-[1px]"><T s="0" /></div>
        <div className="w-[913px] h-[19px] border border-[#dcdcdc] bg-[#f8f8f8] flex items-center pl-[1px] whitespace-nowrap"><T s="在此输入节点区的箍筋信息，输入格式：级别+直径+间距；如C12@100" /></div>
        <div className="flex-1 h-[19px] border border-[#dcdcdc] bg-[#f8f8f8] flex items-center pl-[2px]"><T s="103.9 FPS" /></div>
      </div>
      <Taskbar />

      <Ime />
      <div className="absolute left-[1110px] -top-[34px] w-[52px] h-[52px] rounded-full bg-[#35b55a] border-[3px] border-[#c9cfcb] z-30 flex items-end justify-center text-white text-[12px] font-bold leading-[14px] pb-[2px]">64</div>
      <div className="absolute left-[512px] top-[108px] w-[154px] h-[94px] border-[7px] border-[#ff0000] z-20" />
      <div className="absolute left-[825px] top-[176px] w-[541px] h-[515px] border border-[#555] border-r-0 bg-gradient-to-b from-[#b6c6d6] from-0% to-[#d6e4f2] to-[8%] z-20 flex flex-col pl-[7px]">
        <div className="h-[31px] flex items-center pt-[6px] text-[12px] text-[#999]">参数图</div>
        <div className="h-[474px] bg-black border-t border-white"><Dim /></div>
      </div>
    </div>
  );
}
